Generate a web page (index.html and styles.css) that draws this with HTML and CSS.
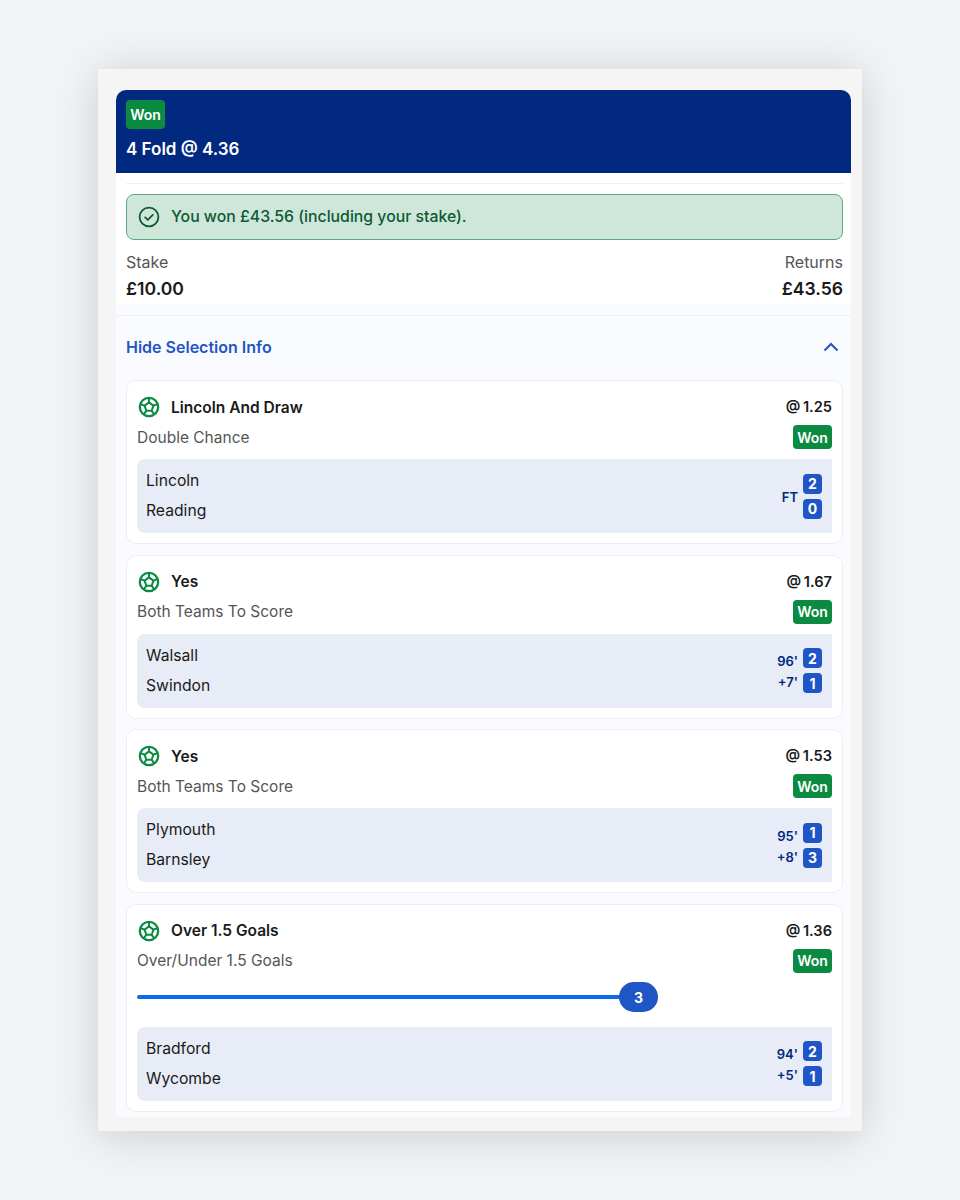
FILE: index.html
```html
<!DOCTYPE html>
<html lang="en">
<head>
  <meta charset="UTF-8">
  <meta name="viewport" content="width=device-width, initial-scale=1.0">
  <title>4 Fold</title>
  <link rel="stylesheet" href="styles.css">
</head>
<body>

<svg class="defs" width="0" height="0" aria-hidden="true">
  <symbol id="ball" viewBox="0 0 22 22">
    <g fill="none" stroke="#0b8a42" stroke-linejoin="round">
      <circle cx="11" cy="11" r="9.2" stroke-width="2.3"/>
      <path d="M11 6.4l4.4 3.2-1.7 5.2h-5.4l-1.7-5.2z" stroke-width="2"/>
      <path d="M11 2v4.4M15.4 9.6l4.4-1.6M13.7 14.8l2.8 3.8M8.3 14.8l-2.8 3.8M6.6 9.6l-4.4-1.6" stroke-width="2"/>
    </g>
  </symbol>
</svg>

<div class="frame">
  <div class="bet">
    <!-- Header -->
    <div class="bet-header">
      <span class="badge">Won</span>
      <div class="bet-title">4 Fold @ 4.36</div>
    </div>

    <!-- Summary -->
    <div class="summary">
      <div class="alert">
        <svg class="alert-icon" viewBox="0 0 22 22">
          <circle cx="11" cy="11" r="9.4" fill="none" stroke="#0d5a32" stroke-width="1.8"/>
          <path d="M7.2 11.3l2.6 2.5 5-5" fill="none" stroke="#0d5a32" stroke-width="1.8" stroke-linecap="round" stroke-linejoin="round"/>
        </svg>
        <span>You won £43.56 (including your stake).</span>
      </div>
      <div class="totals">
        <div>
          <div class="total-label">Stake</div>
          <div class="total-value">£10.00</div>
        </div>
        <div class="align-right">
          <div class="total-label">Returns</div>
          <div class="total-value">£43.56</div>
        </div>
      </div>
    </div>

    <!-- Selections -->
    <div class="selections">
      <div class="toggle">
        <span>Hide Selection Info</span>
        <svg class="chevron" viewBox="0 0 16 10">
          <path d="M1.5 8.5L8 2l6.5 6.5" fill="none" stroke="#1f55c5" stroke-width="2"/>
        </svg>
      </div>

      <div class="card">
        <div class="card-row">
          <div class="pick"><svg class="ball"><use href="#ball"/></svg><span>Lincoln And Draw</span></div>
          <div class="odds">@ 1.25</div>
        </div>
        <div class="card-row market-row">
          <div class="market">Double Chance</div>
          <span class="badge small">Won</span>
        </div>
        <div class="match">
          <div class="teams"><div>Lincoln</div><div>Reading</div></div>
          <div class="clock"><span>FT</span></div>
          <div class="scores"><span class="score">2</span><span class="score">0</span></div>
        </div>
      </div>

      <div class="card">
        <div class="card-row">
          <div class="pick"><svg class="ball"><use href="#ball"/></svg><span>Yes</span></div>
          <div class="odds">@ 1.67</div>
        </div>
        <div class="card-row market-row">
          <div class="market">Both Teams To Score</div>
          <span class="badge small">Won</span>
        </div>
        <div class="match">
          <div class="teams"><div>Walsall</div><div>Swindon</div></div>
          <div class="clock"><span>96'</span><span>+7'</span></div>
          <div class="scores"><span class="score">2</span><span class="score">1</span></div>
        </div>
      </div>

      <div class="card">
        <div class="card-row">
          <div class="pick"><svg class="ball"><use href="#ball"/></svg><span>Yes</span></div>
          <div class="odds">@ 1.53</div>
        </div>
        <div class="card-row market-row">
          <div class="market">Both Teams To Score</div>
          <span class="badge small">Won</span>
        </div>
        <div class="match">
          <div class="teams"><div>Plymouth</div><div>Barnsley</div></div>
          <div class="clock"><span>95'</span><span>+8'</span></div>
          <div class="scores"><span class="score">1</span><span class="score">3</span></div>
        </div>
      </div>

      <div class="card">
        <div class="card-row">
          <div class="pick"><svg class="ball"><use href="#ball"/></svg><span>Over 1.5 Goals</span></div>
          <div class="odds">@ 1.36</div>
        </div>
        <div class="card-row market-row">
          <div class="market">Over/Under 1.5 Goals</div>
          <span class="badge small">Won</span>
        </div>
        <div class="progress">
          <div class="progress-line"></div>
          <div class="progress-pill">3</div>
        </div>
        <div class="match">
          <div class="teams"><div>Bradford</div><div>Wycombe</div></div>
          <div class="clock"><span>94'</span><span>+5'</span></div>
          <div class="scores"><span class="score">2</span><span class="score">1</span></div>
        </div>
      </div>
    </div>
  </div>
</div>

</body>
</html>
```

FILE: styles.css
```css
body {
  margin: 0;
  height: 1200px;
  overflow: hidden;
  background: #f2f3f5;
  font-family: "Inter", "Liberation Sans", sans-serif;
  color: #1a1a1a;
}

.defs {
  display: block;
  height: 0;
}

/* Phone frame */
.frame {
  width: 764px;
  height: 1062px;
  margin: 69px 0 0 98px;
  padding: 21px 11px 14px 18px;
  box-sizing: border-box;
  background: #f5f5f6;
  box-shadow: 0 4px 40px rgba(0, 0, 0, 0.16);
}

.bet {
  display: flex;
  flex-direction: column;
  height: 100%;
  overflow: hidden;
  background: #fff;
  border-radius: 10px 10px 0 0;
}

/* Header */
.bet-header {
  flex: none;
  height: 83px;
  padding: 10px;
  box-sizing: border-box;
  background: #00297f;
}

.badge {
  display: inline-flex;
  align-items: center;
  justify-content: center;
  width: 39px;
  height: 29px;
  border-radius: 4px;
  background: #0b8a42;
  color: #fff;
  font-size: 14px;
  font-weight: 600;
}

.badge.small {
  height: 24px;
}

.bet-title {
  margin-top: 9px;
  color: #fff;
  font-size: 17px;
  line-height: 22px;
  font-weight: 600;
}

/* Summary */
.summary {
  flex: none;
  padding: 10px 8px 0 10px;
  height: 131px;
  box-sizing: border-box;
}

.summary::before {
  content: "";
  display: block;
  height: 1px;
  background: #f0f1f4;
  margin-bottom: 10px;
}

.alert {
  display: flex;
  align-items: center;
  gap: 11px;
  height: 46px;
  padding: 0 11px;
  box-sizing: border-box;
  border: 1px solid #5ea97f;
  border-radius: 8px;
  background: #cfe7da;
  color: #0d5a32;
  font-size: 15.8px;
  line-height: 44px;
  font-weight: 500;
}

.alert-icon {
  width: 22px;
  height: 22px;
  flex: none;
}

.totals {
  display: flex;
  justify-content: space-between;
  margin-top: 10px;
}

.align-right {
  text-align: right;
}

.total-label {
  color: #555;
  font-size: 16px;
  line-height: 24px;
}

.total-value {
  margin-top: 2px;
  font-size: 17.6px;
  line-height: 26px;
  font-weight: 600;
}

/* Selections */
.selections {
  flex: 1;
  min-height: 0;
  padding: 0 8px 0 10px;
  background: #fafbfe;
}

.toggle {
  display: flex;
  align-items: center;
  justify-content: space-between;
  height: 62px;
  margin: 11px -8px 0 -10px;
  padding: 0 12px 2px 10px;
  border-top: 1px solid #eef0f5;
  color: #1f55c5;
  font-size: 16px;
  font-weight: 600;
}

.chevron {
  width: 16px;
  height: 10px;
}

.card {
  margin-bottom: 10.67px;
  padding: 10px;
  border: 1px solid #eceef3;
  border-radius: 10px;
  background: #fff;
}

.card-row {
  display: flex;
  align-items: center;
  justify-content: space-between;
  height: 30px;
  margin-top: 1px;
}

.market-row {
  margin-top: 0;
  margin-bottom: 7px;
}

.pick {
  display: flex;
  align-items: center;
  gap: 11px;
  margin-left: 1px;
  font-size: 15.5px;
  font-weight: 600;
}

.ball {
  width: 22px;
  height: 22px;
  flex: none;
}

.odds {
  font-size: 14.6px;
  font-weight: 600;
  word-spacing: -1px;
}

.market {
  color: #555;
  font-size: 15.5px;
}

.match {
  display: flex;
  align-items: center;
  height: 74px;
  padding: 0 10px 0 9px;
  border-radius: 8px 0 0 8px;
  background: #e8ecf7;
}

.teams {
  flex: 1;
  font-size: 15.7px;
  line-height: 30px;
}

.clock {
  display: flex;
  flex-direction: column;
  align-items: flex-end;
  gap: 3px;
  margin-right: 5px;
  padding-top: 2px;
  color: #00297f;
  font-size: 13px;
  line-height: 18px;
  font-weight: 600;
}

.scores {
  display: flex;
  flex-direction: column;
  gap: 5px;
}

.score {
  width: 19px;
  height: 20px;
  display: flex;
  align-items: center;
  justify-content: center;
  border-radius: 4px;
  background: #1f55c5;
  color: #fff;
  font-size: 14px;
  font-weight: 700;
}

/* Goals progress */
.progress {
  display: flex;
  align-items: center;
  height: 30px;
  margin: -0.5px 0 14.5px;
}

.progress-line {
  width: 490px;
  height: 4px;
  margin-right: -8px;
  border-radius: 2px;
  background: #0b6bea;
}

.progress-pill {
  width: 39px;
  height: 30px;
  border-radius: 15px;
  display: flex;
  align-items: center;
  justify-content: center;
  background: #1f55c5;
  color: #fff;
  font-size: 14px;
  font-weight: 700;
}
```
